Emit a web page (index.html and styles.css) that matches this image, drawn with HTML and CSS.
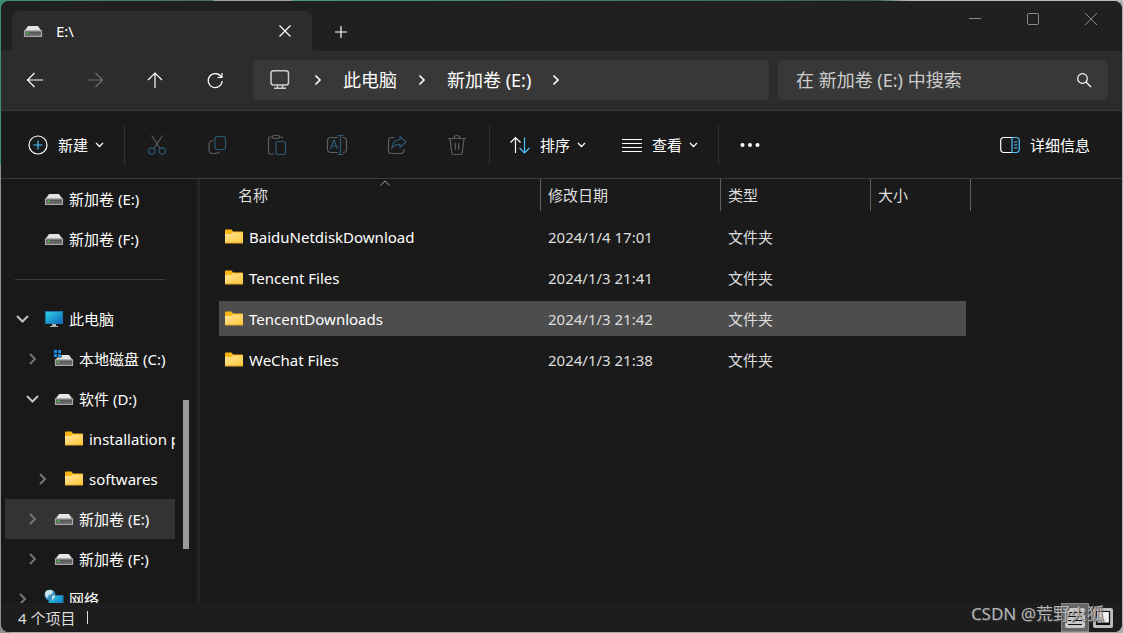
FILE: index.html
```html
<!DOCTYPE html>
<html lang="zh-CN">
<head>
<meta charset="utf-8">
<title>E:\</title>
<link rel="stylesheet" href="styles.css">
</head>
<body>
<svg class="sprite" aria-hidden="true">
  <defs>
    <linearGradient id="g-folder" x1="0" y1="0" x2="1" y2="1"><stop offset="0" stop-color="#ffe59a"/><stop offset="1" stop-color="#fdc83a"/></linearGradient>
    <linearGradient id="g-screen" x1="0" y1="0" x2="1" y2="1"><stop offset="0" stop-color="#32d6e0"/><stop offset="1" stop-color="#0b66c3"/></linearGradient>
    <linearGradient id="g-drive" x1="0" y1="0" x2="0" y2="1"><stop offset="0" stop-color="#4c4c4c"/><stop offset="1" stop-color="#777"/></linearGradient>
    <symbol id="drive" viewBox="0 0 18 18">
      <path d="M4 4h10l3.500 5H.5z" fill="#e3e3e6"/>
      <path d="M.5 8.800h17v5.700H.5z" fill="url(#g-drive)" stroke="#a9a9a9"/>
      <path d="M2.500 10.500h2v1.500h-2z" fill="#35e03c"/>
    </symbol>
    <symbol id="drive-system" viewBox="0 0 18 18">
      <path d="M4 5h10l3.500 5H.5z" fill="#e3e3e6"/>
      <path d="M.5 9.800h17v5.700H.5z" fill="url(#g-drive)" stroke="#a9a9a9"/>
      <path d="M2.500 11.500h2V13h-2z" fill="#35e03c"/>
      <path d="M-1 0h7.500v7.500H-1z" fill="#1a1a1a"/>
      <path d="M-1 0h3v3h-3zM3 0h3v3H3zM-1 4h3v3h-3zM3 4h3v3H3z" fill="#1591e6"/>
    </symbol>
    <symbol id="folder" viewBox="0 0 18 18">
      <path d="M0 2.500q0-1 1-1h5.500l1.500 2h9q1 0 1 1V9H0z" fill="#fbb612"/>
      <path d="M0 6h6l2-1.500h10V15H0z" fill="url(#g-folder)"/>
      <path d="M0 14.500h18v1H0z" fill="#e9a526"/>
    </symbol>
    <symbol id="computer" viewBox="0 0 18 18">
      <path d="M.5 1.500h17v12H.5z" fill="url(#g-screen)" stroke="#1a75a8"/>
      <path d="M7 14h4v2h2v1H5v-1h2z" fill="#aeb4b8"/>
    </symbol>
    <symbol id="network" viewBox="0 0 18 18">
      <path d="M4 5.500h14V17H4z" fill="url(#g-screen)" stroke="#1a75a8"/>
      <circle cx="5" cy="5" r="5.500" fill="#3e92bd"/>
      <path d="M1 1q4-2 7 0L7 4 4 5 2 8Q0 6 0 3zM7 6l3-1q0 4-3 5z" fill="#cbe5ee"/>
    </symbol>
    <symbol id="right" viewBox="0 0 11 12"><path d="m3 1 5 5-5 5" fill="none" stroke="currentColor" stroke-width="2"/></symbol>
    <symbol id="down" viewBox="0 0 11 12"><path d="m0 3 5.500 5.500L11 3" fill="none" stroke="currentColor" stroke-width="2"/></symbol>
    <symbol id="small-down" viewBox="0 0 9 9"><path d="m1 3 3.500 3.500L8 3" fill="none" stroke="currentColor" stroke-width="1.300"/></symbol>
    <symbol id="crumb" viewBox="0 0 6 12"><path d="m.5 1.500 4.500 4.500-4.500 4.500" fill="none" stroke="currentColor" stroke-width="1.600"/></symbol>
  </defs>
</svg>
<main class="window">
  <header class="titlebar">
    <div class="tab">
      <svg class="icon18"><use href="#drive"/></svg>
      <span class="tab-title">E:\</span>
      <button class="tab-close" aria-label="关闭标签页"><svg class="icon12" viewBox="0 0 12 12"><path d="m.5.5 11 11m0-11-11 11"/></svg></button>
    </div>
    <button class="tab-new" aria-label="新标签页"><svg class="icon12" viewBox="0 0 12 12"><path d="M6 0v12M0 6h12"/></svg></button>
    <div class="controls">
      <button aria-label="最小化"><svg class="icon12" viewBox="0 0 12 12"><path d="M0 5.500h12"/></svg></button>
      <button aria-label="最大化"><svg class="icon12" viewBox="0 0 12 12"><rect x=".5" y=".5" width="11" height="11" rx="1"/></svg></button>
      <button aria-label="关闭"><svg class="icon12" viewBox="0 0 12 12"><path d="m0 0 12 12M12 0 0 12"/></svg></button>
    </div>
  </header>

  <div class="navbar">
    <button class="tool" aria-label="后退"><svg class="icon20" viewBox="0 0 20 20"><path d="M18 10H2.500M9.500 3l-7 7 7 7"/></svg></button>
    <button class="tool dim" aria-label="前进" disabled><svg class="icon20" viewBox="0 0 20 20"><path d="M2.500 10H18M10.500 3l7 7-7 7"/></svg></button>
    <button class="tool" aria-label="向上"><svg class="icon20" viewBox="0 0 20 20"><path d="M10 18V3M3 10l7-7 7 7"/></svg></button>
    <button class="tool" aria-label="刷新"><svg class="icon20" viewBox="0 0 20 20"><path d="M16.500 7.500A7 7 0 1 0 17.200 11M17 3v4.500h-4.500"/></svg></button>
    <nav class="address" aria-label="路径">
      <svg class="icon20 address-icon" viewBox="0 0 20 20"><rect x="1" y=".7" width="17.500" height="14.300" rx="2.500"/><path d="M7.500 15v3M12.500 15v3M4 18.300h12"/></svg>
      <svg class="crumb"><use href="#crumb"/></svg>
      <a href="#pc">此电脑</a>
      <svg class="crumb"><use href="#crumb"/></svg>
      <a href="#e">新加卷 (E:)</a>
      <svg class="crumb"><use href="#crumb"/></svg>
    </nav>
    <label class="search">
      <input type="text" aria-label="搜索" placeholder="在 新加卷 (E:) 中搜索">
      <svg class="icon14" viewBox="0 0 14 14"><circle cx="5.500" cy="5.500" r="4.800"/><path d="m9 9 5 5"/></svg>
    </label>
  </div>

  <div class="commands">
    <button class="command"><svg class="icon20" viewBox="0 0 20 20"><circle cx="10" cy="10" r="9"/><path class="blue" d="M10 5.500v9M5.500 10h9"/></svg>新建<svg class="caret"><use href="#small-down"/></svg></button>
    <span class="sep"></span>
    <button class="tool off" aria-label="剪切" disabled><svg class="icon20" viewBox="0 0 20 20"><path d="m4.500.5 8.500 13M15.500.5 7 13.500"/><circle class="blue" cx="4.800" cy="16" r="3.200"/><circle class="blue" cx="15.200" cy="16" r="3.200"/></svg></button>
    <button class="tool off" aria-label="复制" disabled><svg class="icon20" viewBox="0 0 20 20"><path d="M6 5.500q-4 .5-4 4V15q0 3.500 3.500 3.500h3q3 0 4-2"/><rect class="blue" x="8" y="1.500" width="10.500" height="13" rx="2.500"/></svg></button>
    <button class="tool off" aria-label="粘贴" disabled><svg class="icon20" viewBox="0 0 20 20"><path d="M6 2H3q-1.500 0-1.500 1.500v14Q1.500 19 3 19h4M12 2h2.500Q16 2 16 3.500"/><rect x="5.500" y=".5" width="7" height="3" rx="1.500"/><rect class="blue" x="9" y="6.500" width="9.500" height="13" rx="1.500"/></svg></button>
    <button class="tool off" aria-label="重命名" disabled><svg class="icon20" viewBox="0 0 20 20"><path d="M11 2.500H4Q.5 2.500.5 6v8q0 3.500 3.500 3.500h7M16 2.500q3.500 0 3.500 3.500v8q0 3.500-3.500 3.500"/><path class="blue" d="m3.500 14 3.500-9 3.500 9M4.700 11h4.600M13.500.5v19M10.500.5h6M10.500 19.500h6"/></svg></button>
    <button class="tool off" aria-label="共享" disabled><svg class="icon20" viewBox="0 0 20 20"><path d="M8 2.500H4.500Q1.500 2.500 1.500 6v9q0 3.500 3 3.500h9q3.500 0 3.500-3.500v-1"/><path class="blue" d="M13 1.500 19 7l-6 5.500V9.500q-5-.5-8 3.500 0-8 8-8.500z"/></svg></button>
    <button class="tool off" aria-label="删除" disabled><svg class="icon20" viewBox="0 0 20 20"><path d="M1 3.500h18M3 3.500l1.700 14q.3 2 2 2h6.600q1.700 0 2-2l1.700-14M7 3.500Q7 .5 10 .5t3 3M8.300 8v7M11.700 8v7"/></svg></button>
    <span class="sep"></span>
    <button class="command"><svg class="icon20" viewBox="0 0 20 20"><path d="M5.500 18V2.500M.5 7.500l5-5 5 5"/><path class="blue" d="M14.500 2.500V18M9.500 13l5 5 5-5"/></svg>排序<svg class="caret"><use href="#small-down"/></svg></button>
    <button class="command"><svg class="icon20" viewBox="0 0 20 20"><path d="M0 4.500h20M0 8.500h20M0 12.500h20M0 16.500h20"/></svg>查看<svg class="caret"><use href="#small-down"/></svg></button>
    <span class="sep"></span>
    <button class="tool" aria-label="更多"><svg class="icon20 dots" viewBox="0 0 20 20"><circle cx="1.500" cy="10" r="2"/><circle cx="9" cy="10" r="2"/><circle cx="16.500" cy="10" r="2"/></svg></button>
    <button class="command details"><svg class="icon20" viewBox="0 0 20 20"><path d="M12 2.500H4Q.7 2.500.7 6v8q0 3.500 3.300 3.500h8"/><path class="blue" d="M12 2.500h4q3.300 0 3.300 3.500v8q0 3.500-3.300 3.500h-4zM14 7h3.500M14 10h3.500M14 13h3.500"/></svg>详细信息</button>
  </div>

  <div class="content">
    <aside class="sidebar">
      <nav class="tree" aria-label="导航">
        <button class="node"><span class="twist"></span><svg class="icon18"><use href="#drive"/></svg>新加卷 (E:)</button>
        <button class="node"><span class="twist"></span><svg class="icon18"><use href="#drive"/></svg>新加卷 (F:)</button>
        <hr class="tree-line">
        <button class="node"><svg class="twist open"><use href="#down"/></svg><svg class="icon18"><use href="#computer"/></svg>此电脑</button>
        <button class="node level1"><svg class="twist"><use href="#right"/></svg><svg class="icon18"><use href="#drive-system"/></svg>本地磁盘 (C:)</button>
        <button class="node level1"><svg class="twist open"><use href="#down"/></svg><svg class="icon18"><use href="#drive"/></svg>软件 (D:)</button>
        <button class="node level2"><span class="twist"></span><svg class="icon18"><use href="#folder"/></svg>installation package</button>
        <button class="node level2"><svg class="twist"><use href="#right"/></svg><svg class="icon18"><use href="#folder"/></svg>softwares</button>
        <button class="node level1 selected"><svg class="twist"><use href="#right"/></svg><svg class="icon18"><use href="#drive"/></svg>新加卷 (E:)</button>
        <button class="node level1"><svg class="twist"><use href="#right"/></svg><svg class="icon18"><use href="#drive"/></svg>新加卷 (F:)</button>
        <button class="node"><svg class="twist"><use href="#right"/></svg><svg class="icon18"><use href="#network"/></svg>网络</button>
      </nav>
      <div class="scroll"><span class="thumb"></span></div>
    </aside>
    <section class="files">
      <table class="list">
        <colgroup><col class="c-name"><col class="c-date"><col class="c-type"><col class="c-size"></colgroup>
        <thead><tr>
          <th class="name-head"><div class="head">名称<svg class="sort" viewBox="0 0 10 6"><path d="m.5 5.500 4.500-4.500 4.500 4.500"/></svg></div></th>
          <th><div class="head">修改日期</div></th>
          <th><div class="head">类型</div></th>
          <th><div class="head">大小</div></th>
        </tr></thead>
        <tbody>
          <tr><td><div class="file"><svg class="icon18"><use href="#folder"/></svg>BaiduNetdiskDownload</div></td><td>2024/1/4 17:01</td><td>文件夹</td><td></td></tr>
          <tr><td><div class="file"><svg class="icon18"><use href="#folder"/></svg>Tencent Files</div></td><td>2024/1/3 21:41</td><td>文件夹</td><td></td></tr>
          <tr class="hover"><td><div class="file"><svg class="icon18"><use href="#folder"/></svg>TencentDownloads</div></td><td>2024/1/3 21:42</td><td>文件夹</td><td></td></tr>
          <tr><td><div class="file"><svg class="icon18"><use href="#folder"/></svg>WeChat Files</div></td><td>2024/1/3 21:38</td><td>文件夹</td><td></td></tr>
        </tbody>
      </table>
    </section>
  </div>

  <footer class="status">
    <span>4 个项目</span><span class="status-line"></span>
    <div class="views">
      <button class="view active" aria-label="详细信息"><svg class="icon20" viewBox="0 0 20 20"><rect width="20" height="20" rx="2" fill="#c8c8c8"/><path d="M3 4.500h14M3 8.500h14M3 12.500h14M3 16.500h14" stroke="#111" stroke-width="1"/></svg></button>
      <button class="view" aria-label="大图标"><svg class="icon20" viewBox="0 0 20 20"><rect width="20" height="20" rx="2" fill="#bdbdbd"/><path d="M3.500 3.500h13v13h-13z" fill="#f0f0f0" stroke="#111"/><path d="M3 14.500h14V17H3z" fill="#111"/></svg></button>
    </div>
    <span class="watermark">CSDN @荒野火狐</span>
  </footer>
</main>
</body>
</html>
```

FILE: styles.css
```css
* { box-sizing: border-box; }
body {
  margin: 0;
  height: 100vh;
  padding: 1px;
  background:
    linear-gradient(90deg, #3f8f73 0, #48735f 19%, #a0a0a0 19%, #a0a0a0 26%, #4b9a7d 26%, #37635a 78%, #b9bcbb 81%) top / 100% 2px no-repeat,
    linear-gradient(#3f8f73 0, #3f8f73 165px, #8f8f8f 165px) left / 10px 100% no-repeat,
    #a9a9a9;
  color: #fff;
  font: 15px/20px "Noto Sans", "Noto Sans CJK SC", sans-serif;
}
button { margin: 0; padding: 0; border: 0; background: none; color: inherit; font: inherit; }
svg { flex: none; fill: none; stroke: currentColor; stroke-width: 1.2; overflow: visible; }
symbol { stroke: none; overflow: visible; }
.sprite { position: absolute; width: 0; height: 0; }
.icon12 { width: 12px; height: 12px; }
.icon14 { width: 14px; height: 14px; }
.icon18 { width: 18px; height: 18px; stroke: none; }
.icon20 { width: 20px; height: 20px; }

.window {
  display: flex;
  flex-direction: column;
  height: 100%;
  border-radius: 8px;
  background: #1a1a1a;
  overflow: hidden;
}
.titlebar { display: flex; height: 50px; flex: none; background: #202020; padding: 0 2px 0 11px; }
.tab {
  position: relative;
  display: flex;
  align-items: center;
  width: 300px;
  margin-top: 10px;
  padding: 0 21px 0 12px;
  border-radius: 8px 8px 0 0;
  background: #2c2c2c;
}
.tab::before, .tab::after { content: ""; position: absolute; bottom: 0; width: 4px; height: 4px; }
.tab::before { left: -4px; background: radial-gradient(circle at 0 0, #202020 4px, #2c2c2c 4px); }
.tab::after { right: -4px; background: radial-gradient(circle at 100% 0, #202020 4px, #2c2c2c 4px); }
.tab-title { margin-left: 14px; }
.tab-close { display: flex; margin-left: auto; }
.tab-new { display: flex; align-items: center; justify-content: center; width: 58px; padding-top: 12px; }
.controls { display: flex; margin-left: auto; color: #8b8b8b; }
.controls button { display: flex; align-items: center; justify-content: center; width: 58px; height: 36px; }
.controls svg { stroke-width: 1; }

.navbar {
  display: flex;
  align-items: center;
  flex: none;
  height: 60px;
  padding: 0 14px 2px 4px;
  border-bottom: 1px solid #3b3b3b;
  background: #2c2c2c;
}
.tool { display: flex; flex: none; align-items: center; justify-content: center; width: 60px; height: 40px; }
.dim { color: #6e6e6e; }
.address {
  display: flex;
  align-items: center;
  flex: 1;
  gap: 22px;
  height: 40px;
  margin: 0 9px 0 8px;
  padding-left: 17px;
  border-radius: 5px;
  background: #383838;
  font-size: 18px;
  line-height: 24px;
}
.address a { color: inherit; text-decoration: none; white-space: nowrap; }
.address-icon { margin-right: 3px; color: #cfcfcf; stroke-width: 1.5; }
.crumb { width: 6px; height: 12px; }
.search {
  display: flex;
  align-items: center;
  width: 330px;
  height: 40px;
  padding: 0 17px 0 18px;
  border-radius: 5px;
  background: #383838;
}
.search input {
  flex: 1;
  min-width: 0;
  padding: 0;
  border: 0;
  outline: 0;
  background: none;
  color: #fff;
  font: inherit;
  font-size: 18px;
  line-height: 24px;
}
.search input::placeholder { color: #cdcdcd; opacity: 1; }

.commands {
  display: flex;
  align-items: center;
  flex: none;
  height: 68px;
  padding: 0 14px 0 9px;
  border-bottom: 1px solid #3b3b3b;
}
.command { display: flex; align-items: center; gap: 10px; height: 40px; padding: 0 18px; white-space: nowrap; }
.command .caret { width: 9px; height: 9px; margin-left: -3px; }
.sep { width: 1px; height: 40px; margin: 0 2px; background: #313131; }
.blue { stroke: #4cc2ff; }
.off { color: #5d5d5d; }
.off .blue { stroke: #2a5a76; }
.dots { fill: #fff; stroke: none; }
.details { margin-left: auto; }

.content { display: flex; flex: 1; min-height: 0; }
.sidebar { display: flex; flex: none; width: 199px; padding-left: 4px; border-right: 3px solid #252525; background: #191919; overflow: hidden; }
.tree { width: 170px; overflow: hidden; }
.node { display: flex; align-items: center; width: 100%; height: 40px; padding-left: 12px; white-space: nowrap; }
.level1 { padding-left: 22px; }
.level2 { padding-left: 32px; }
.selected { background: #333; }
.twist { flex: none; width: 11px; height: 12px; margin-right: 17px; color: #767676; }
.open { color: #c2c2c2; }
.node .icon18 { margin-right: 6px; }
.tree-line { height: 1px; margin: 20px 10px 19px; border: 0; background: #3d3d3d; }
.scroll { display: flex; flex-direction: column; padding: 221px 0 54px 8px; }
.thumb { flex: 1; width: 6px; background: #9b9b9b; }

.files { flex: 1; min-width: 0; padding-left: 19px; }
.list { width: 752px; table-layout: fixed; border-collapse: separate; border-spacing: 0; color: #dedede; }
.c-name { width: 322px; }
.c-date { width: 180px; }
.c-type { width: 150px; }
.c-size { width: 100px; }
.list th { height: 40px; padding: 0; vertical-align: top; text-align: left; font-weight: 400; }
.list .name-head { padding-left: 11px; }
.head { position: relative; height: 32px; padding: 6px 0 0 8px; border-right: 1px solid #5f5f5f; }
.list th + th .head { padding-left: 7px; }
.sort { position: absolute; top: 1px; left: 50%; width: 10px; height: 6px; margin-left: -5px; stroke: #a0a0a0; stroke-width: 1; }
.list td { height: 41px; padding: 0 0 0 7px; border-bottom: 6px solid transparent; background-clip: padding-box; }
.list td:first-child { padding-left: 6px; color: #fff; }
.list td:last-child { border-right: 5px solid transparent; }
.hover td { background-color: #4d4d4d; }
.file { display: flex; align-items: center; gap: 6px; }

.status { position: relative; display: flex; align-items: center; flex: none; height: 29px; padding: 0 5px 0 17px; background: #1d1d1d; color: #dedede; }
.status-line { width: 1px; height: 13px; margin-left: 12px; background: #dedede; }
.views { display: flex; margin-left: auto; }
.view { display: flex; align-items: center; justify-content: center; width: 28px; height: 29px; }
.view svg { stroke: none; }
.active { border: 1px solid #858585; background: #666; }
.watermark { position: absolute; right: 18px; top: 1px; color: #b5b5b5; font-size: 17px; text-shadow: 1px 1px 1px #444; }
```
